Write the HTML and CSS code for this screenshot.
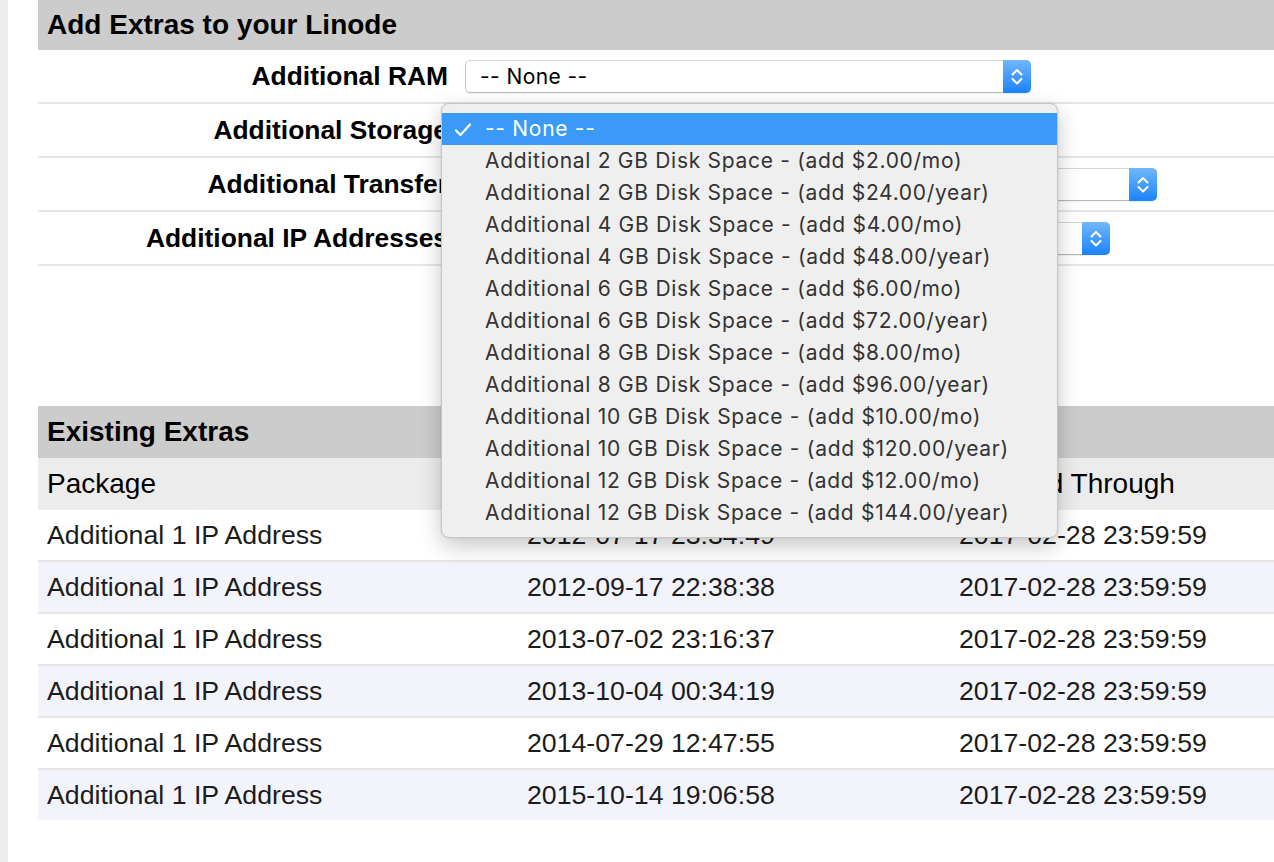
FILE: index.html
```html
<!DOCTYPE html>
<html lang="en">
<head>
<meta charset="utf-8">
<title>Linode Extras</title>
<link rel="stylesheet" href="styles.css">
</head>
<body>
<div class="page">
  <section class="panel">
    <h2 class="panel-title">Add Extras to your Linode</h2>

    <div class="form-row">
      <label class="form-label">Additional RAM</label>
      <div class="select select--ram">
        <span class="select-value">-- None --</span>
        <span class="select-arrows">
          <svg width="28" height="33" viewBox="0 0 28 33"><path d="M9.5 14.5 L14 10 L18.5 14.5 M9.5 19 L14 23.5 L18.5 19" fill="none" stroke="#fff" stroke-width="2" stroke-linecap="round" stroke-linejoin="round"/></svg>
        </span>
      </div>
    </div>

    <div class="form-row">
      <label class="form-label">Additional Storage</label>
      <div class="select-wrap">
        <div class="select select--storage">
          <span class="select-value">-- None --</span>
          <span class="select-arrows">
            <svg width="28" height="33" viewBox="0 0 28 33"><path d="M9.5 14.5 L14 10 L18.5 14.5 M9.5 19 L14 23.5 L18.5 19" fill="none" stroke="#fff" stroke-width="2" stroke-linecap="round" stroke-linejoin="round"/></svg>
          </span>
        </div>
        <ul class="menu">
          <li class="menu-item is-selected">
            <svg class="menu-check" width="18" height="16" viewBox="0 0 18 16"><path d="M2 8.5 L6.5 13 L16 2.5" fill="none" stroke="#fff" stroke-width="2.2" stroke-linecap="round" stroke-linejoin="round"/></svg>
            -- None --
          </li>
          <li class="menu-item">Additional 2 GB Disk Space - (add $2.00/mo)</li>
          <li class="menu-item">Additional 2 GB Disk Space - (add $24.00/year)</li>
          <li class="menu-item">Additional 4 GB Disk Space - (add $4.00/mo)</li>
          <li class="menu-item">Additional 4 GB Disk Space - (add $48.00/year)</li>
          <li class="menu-item">Additional 6 GB Disk Space - (add $6.00/mo)</li>
          <li class="menu-item">Additional 6 GB Disk Space - (add $72.00/year)</li>
          <li class="menu-item">Additional 8 GB Disk Space - (add $8.00/mo)</li>
          <li class="menu-item">Additional 8 GB Disk Space - (add $96.00/year)</li>
          <li class="menu-item">Additional 10 GB Disk Space - (add $10.00/mo)</li>
          <li class="menu-item">Additional 10 GB Disk Space - (add $120.00/year)</li>
          <li class="menu-item">Additional 12 GB Disk Space - (add $12.00/mo)</li>
          <li class="menu-item">Additional 12 GB Disk Space - (add $144.00/year)</li>
        </ul>
      </div>
    </div>

    <div class="form-row">
      <label class="form-label">Additional Transfer</label>
      <div class="select select--transfer">
        <span class="select-value">-- None --</span>
        <span class="select-arrows">
          <svg width="28" height="33" viewBox="0 0 28 33"><path d="M9.5 14.5 L14 10 L18.5 14.5 M9.5 19 L14 23.5 L18.5 19" fill="none" stroke="#fff" stroke-width="2" stroke-linecap="round" stroke-linejoin="round"/></svg>
        </span>
      </div>
    </div>

    <div class="form-row">
      <label class="form-label">Additional IP Addresses</label>
      <div class="select select--ip">
        <span class="select-value">-- None --</span>
        <span class="select-arrows">
          <svg width="28" height="33" viewBox="0 0 28 33"><path d="M9.5 14.5 L14 10 L18.5 14.5 M9.5 19 L14 23.5 L18.5 19" fill="none" stroke="#fff" stroke-width="2" stroke-linecap="round" stroke-linejoin="round"/></svg>
        </span>
      </div>
    </div>

    <div class="form-actions"></div>
  </section>

  <section class="panel">
    <h2 class="panel-title">Existing Extras</h2>
    <table class="extras">
      <thead>
        <tr><th class="col-package">Package</th><th class="col-added">Date Added</th><th>Invoiced Through</th></tr>
      </thead>
      <tbody>
        <tr><td>Additional 1 IP Address</td><td>2012-07-17 23:34:49</td><td>2017-02-28 23:59:59</td></tr>
        <tr><td>Additional 1 IP Address</td><td>2012-09-17 22:38:38</td><td>2017-02-28 23:59:59</td></tr>
        <tr><td>Additional 1 IP Address</td><td>2013-07-02 23:16:37</td><td>2017-02-28 23:59:59</td></tr>
        <tr><td>Additional 1 IP Address</td><td>2013-10-04 00:34:19</td><td>2017-02-28 23:59:59</td></tr>
        <tr><td>Additional 1 IP Address</td><td>2014-07-29 12:47:55</td><td>2017-02-28 23:59:59</td></tr>
        <tr><td>Additional 1 IP Address</td><td>2015-10-14 19:06:58</td><td>2017-02-28 23:59:59</td></tr>
      </tbody>
    </table>
  </section>
</div>
</body>
</html>
```

FILE: styles.css
```css
html, body {
  margin: 0;
  padding: 0;
  height: 100%;
}

body {
  background: #ececec;
  font-family: "Liberation Sans", Arial, Helvetica, sans-serif;
  color: #111;
  overflow: hidden;
}

.page {
  margin-left: 8px;
  min-height: 100%;
  background: #fff;
  padding-left: 30px;
}

/* section headers */
.panel-title {
  margin: 0;
  height: 50px;
  line-height: 50px;
  padding-left: 9px;
  background: #cccccc;
  font-size: 28px;
  font-weight: bold;
  color: #000;
}

.panel + .panel .panel-title {
  height: 52px;
  line-height: 52px;
}

/* form rows */
.form-row {
  display: flex;
  align-items: center;
  height: 52px;
  border-bottom: 2px solid #e6e6e6;
}

.form-label {
  width: 410px;
  text-align: right;
  font-size: 26.4px;
  font-weight: bold;
  color: #000;
  margin-right: 17px;
}

.form-actions {
  height: 140px;
}

/* native-looking select */
.select-wrap {
  position: relative;
}

.select {
  display: flex;
  align-items: stretch;
  height: 33px;
  box-sizing: border-box;
  border: 1px solid #c9c9c9;
  border-top-color: #d6d6d6;
  border-bottom-color: #b9b9b9;
  border-radius: 5px;
  background: #fff;
  box-shadow: 0 1px 1px rgba(0, 0, 0, 0.06);
}

.select--ram { width: 566px; }
.select--storage { width: 560px; }
.select--transfer { width: 692px; }
.select--ip { width: 645px; }

.select-value {
  flex: 1;
  padding-left: 14px;
  font-family: "Inter", "Liberation Sans", sans-serif;
  font-size: 21px;
  letter-spacing: 0.4px;
  line-height: 31px;
  color: #000;
}

.select-arrows {
  width: 28px;
  margin: -1px -1px -1px 0;
  border-radius: 0 5px 5px 0;
  background: linear-gradient(#72b7fb, #1a82fc);
  display: flex;
}

/* open option list */
.menu {
  position: absolute;
  top: -11px;
  left: -24px;
  width: 617px;
  margin: 0;
  padding: 9px 0 8px;
  list-style: none;
  box-sizing: border-box;
  background: #efefef;
  border: 1px solid #c6c6c6;
  border-radius: 8px;
  box-shadow: 0 8px 22px rgba(0, 0, 0, 0.22), 0 0 2px rgba(0, 0, 0, 0.12);
  z-index: 10;
}

.menu-item {
  position: relative;
  height: 32px;
  line-height: 32px;
  padding-left: 43px;
  font-family: "Inter", "Liberation Sans", sans-serif;
  font-size: 21px;
  letter-spacing: 0.7px;
  color: #333;
  white-space: nowrap;
}

.menu-item.is-selected {
  background: #3b9af8;
  color: #fff;
}

.menu-check {
  position: absolute;
  left: 12px;
  top: 9px;
}

/* existing extras table */
.extras {
  width: 100%;
  border-collapse: collapse;
}

.extras th,
.extras td {
  text-align: left;
  padding: 0 0 0 9px;
  white-space: nowrap;
}

.extras th {
  height: 52px;
  background: #ececec;
  font-weight: normal;
  font-size: 28px;
  color: #000;
}

.extras .col-package { width: 471px; }
.extras .col-added { width: 423px; }

.extras td {
  height: 50px;
  font-size: 26.7px;
  color: #1c1c1c;
}

.extras tbody tr + tr td {
  border-top: 2px solid #e6e6e6;
}

.extras tbody tr:nth-child(even) td {
  background: #f3f3fc;
}
```
